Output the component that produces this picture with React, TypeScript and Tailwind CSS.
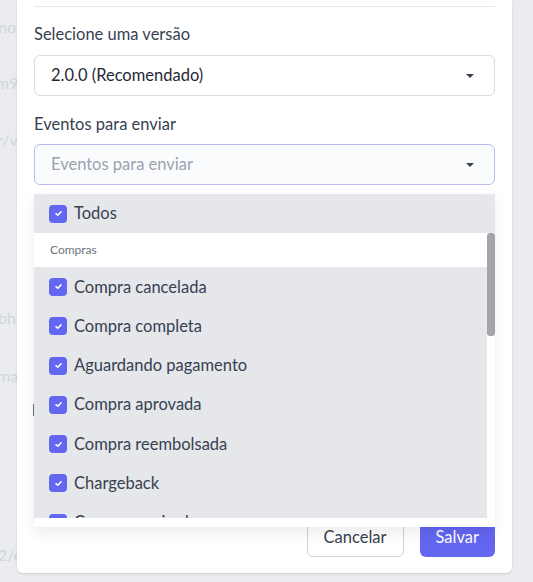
import React from "react";

const font = { fontFamily: '"Lato", "Noto Sans", sans-serif' };

function Caret() {
  return (
    <svg width="8" height="4" viewBox="0 0 8 4" className="shrink-0">
      <path d="M0 0 L8 0 L4 4 Z" fill="#374151" />
    </svg>
  );
}

function Check() {
  return (
    <span className="flex h-[18px] w-[18px] shrink-0 items-center justify-center rounded-[4px] bg-[#6366f1]">
      <svg width="9" height="9" viewBox="0 0 10 10">
        <path d="M2.2 5.2 L4.2 7 L7.8 3.2" fill="none" stroke="#ffffff" strokeWidth="1.7" strokeLinecap="round" strokeLinejoin="round" />
      </svg>
    </span>
  );
}

function Row({ label }: { label: string }) {
  return (
    <div className="flex h-[39.3px] shrink-0 items-center gap-[7px] bg-[#e6e7eb] pl-[15px] text-[16.5px] text-[#374151]">
      <Check />
      <span>{label}</span>
    </div>
  );
}

const items = [
  "Compra cancelada",
  "Compra completa",
  "Aguardando pagamento",
  "Compra aprovada",
  "Compra reembolsada",
  "Chargeback",
  "Compra expirada",
];

export default function App() {
  return (
    <div className="flex h-[582px] w-[533px] overflow-hidden bg-[#eaecef]" style={font}>
      <div className="flex w-[17px] shrink-0 flex-col overflow-hidden text-[16px] leading-[20px] text-[#d2d5da]">
        <div className="mt-[17px] -ml-[2px] whitespace-nowrap">noc</div>
        <div className="mt-[36px] -ml-[4px] whitespace-nowrap">m9</div>
        <div className="mt-[37px] -ml-[3px] whitespace-nowrap">r/v</div>
        <div className="mt-[158px] -ml-[2px] whitespace-nowrap">bh</div>
        <div className="mt-[38px] -ml-[3px] whitespace-nowrap">ma</div>
        <div className="mt-[159px] -ml-[2px] whitespace-nowrap">2/e</div>
      </div>

      <div className="flex h-[573px] w-[495px] shrink-0 flex-col rounded-b-[6px] bg-white pl-[17px] pr-[17px] shadow-sm">
        <div className="mt-[6px] border-t border-[#e5e7eb]" />

        <div className="mt-[17px] text-[16.5px] leading-[20px] text-[#374151]">Selecione uma versão</div>
        <div className="mt-[11px] flex h-[41px] items-center justify-between rounded-[6px] border border-[#d8dadf] bg-white pl-[16px] pr-[20px] text-[16.5px] text-[#1f2937]">
          <span>2.0.0 (Recomendado)</span>
          <Caret />
        </div>

        <div className="mt-[18px] text-[16.5px] leading-[20px] text-[#374151]">Eventos para enviar</div>
        <div className="relative mt-[10px]">
          <div className="flex h-[41px] items-center justify-between rounded-[6px] border border-[#b8bcf0] bg-[#fafbfd] pl-[16px] pr-[20px] text-[16.5px] text-[#9ca3af]">
            <span>Eventos para enviar</span>
            <Caret />
          </div>

          <div className="absolute left-0 right-0 top-[50px] z-10 flex flex-col bg-white pb-[9px] shadow-[0_6px_14px_rgba(0,0,0,0.08)]">
            <Row label="Todos" />
            <div className="flex h-[285px]">
              <div className="flex flex-1 flex-col overflow-hidden">
                <div className="flex h-[34px] shrink-0 items-center bg-white pl-[16px] text-[12px] text-[#6b7280]">Compras</div>
                {items.map((it) => (
                  <Row key={it} label={it} />
                ))}
              </div>
              <div className="w-[8px] bg-white">
                <div className="h-[103px] w-[8px] rounded-[3px] bg-[#a3a5aa]" />
              </div>
            </div>
          </div>
        </div>

        <div className="mt-[219px] h-[12px] w-[1.5px] -ml-[1px] bg-[#6b7280]" />

        <div className="mt-[101px] flex justify-end gap-[16px]">
          <button className="h-[40px] rounded-[6px] border border-[#cfd2d7] bg-white px-[16px] text-[16.5px] text-[#374151]">Cancelar</button>
          <button className="h-[40px] rounded-[6px] bg-[#6366f1] px-[16px] text-[16.5px] text-white">Salvar</button>
        </div>
      </div>

      <div className="flex-1" />
    </div>
  );
}
